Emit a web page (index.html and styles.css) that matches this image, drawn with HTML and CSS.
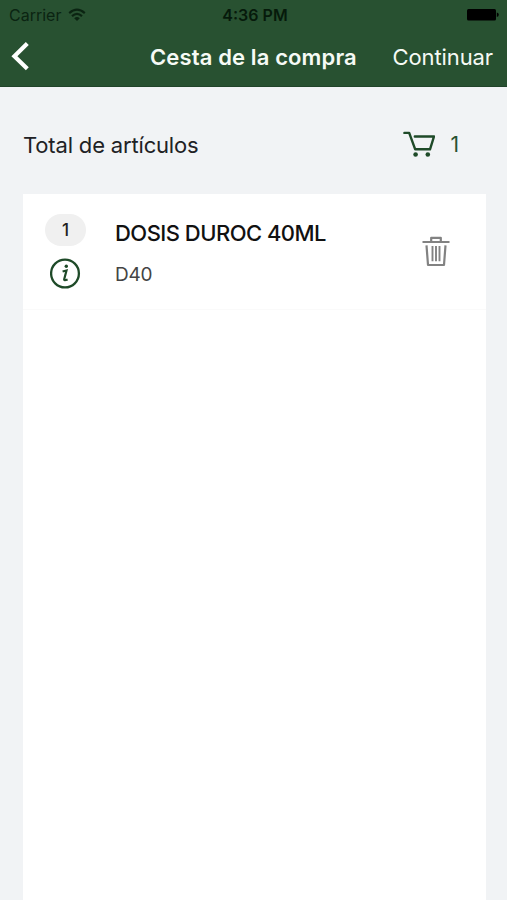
FILE: index.html
```html
<!DOCTYPE html>
<html lang="es">
<head>
<meta charset="utf-8">
<title>Cesta de la compra</title>
<link rel="stylesheet" href="styles.css">
</head>
<body>
<header class="header">
  <div class="status">
    <div class="carrier"><span class="carrier-name">Carrier</span>
      <svg class="wifi" width="18" height="14" viewBox="0 0 18 14" fill="none" stroke="currentColor" stroke-width="2.1"><path d="M1.2 5.1Q9-1.8 16.8 5.1M4 8.1Q9 3.7 14 8.1"/><path d="M6.2 10.3Q9 7.7 11.8 10.3L9 13Z" fill="currentColor" stroke="none"/></svg>
    </div>
    <span class="time">4:36 PM</span>
    <svg class="battery" width="33" height="12" viewBox="0 0 33 12"><rect x="1" width="29" height="11.5" rx="1.5"/><path d="M30.8 3.6Q32.8 4 32.8 5.8T30.8 8Z"/></svg>
  </div>
  <nav class="nav">
    <svg class="back" width="20" height="30" viewBox="0 0 20 30" fill="none" stroke="#fff" stroke-width="4.2"><path d="M17.3 1.6 4.4 14.2 17.3 26.8"/></svg>
    <h1 class="title">Cesta de la compra</h1>
    <span class="continue">Continuar</span>
  </nav>
</header>
<section class="summary">
  <span class="label">Total de artículos</span>
  <svg class="cart" width="32" height="27" viewBox="0 0 32 27" fill="none" stroke="currentColor" stroke-width="2.4"><path d="M1.4 1.9H6.2L12.2 18.3H27L31 5.5H11.8" stroke-linejoin="round" stroke-linecap="round"/><circle cx="12.6" cy="23.5" r="2.3" fill="currentColor" stroke="none"/><circle cx="24.8" cy="23.5" r="2.3" fill="currentColor" stroke="none"/></svg>
  <span class="count">1</span>
</section>
<main class="list">
  <article class="item">
    <div class="meta">
      <span class="qty">1</span>
      <svg class="info" width="31" height="31" viewBox="0 0 31 31" fill="none" stroke="currentColor"><circle cx="15" cy="15.5" r="13.9" stroke-width="2.3"/><path d="M12.6 13.5 16.5 12.5 14.2 21.3Q13.8 23 17.6 21.5" stroke-width="2.2"/><circle cx="16.3" cy="8.3" r="1.7" fill="currentColor" stroke="none"/></svg>
    </div>
    <div class="text">
      <h2 class="name">DOSIS DUROC 40ML</h2>
      <p class="code">D40</p>
    </div>
    <svg class="trash" width="28" height="31" viewBox="0 0 28 31" fill="none" stroke="currentColor" stroke-width="2.2" stroke-linejoin="round"><path d="M.5 6H27.5M9.2 5V1.8H18.8V5M4.5 9.3 6 29H22L23.5 9.3"/><path d="M10.5 10V25.3M17.5 10V25.3M14 10V25.3" stroke-width="1.9"/></svg>
  </article>
</main>
</body>
</html>
```

FILE: styles.css
```css
* { box-sizing: border-box; }
body {
  margin: 0;
  height: 900px;
  display: flex;
  flex-direction: column;
  overflow: hidden;
  background: #f1f3f5;
  font-family: Inter, "Liberation Sans", sans-serif;
}
h1, h2, p { margin: 0; }
svg { display: block; flex: none; }
span, h1, h2, p { white-space: nowrap; }
.header { height: 87px; flex: none; background: #285131; border-bottom: 1px solid #21442a; }
.status {
  height: 29px;
  display: grid;
  grid-template-columns: 1fr auto 1fr;
  align-items: center;
  padding: 0 8px 0 9px;
  color: #0b2412;
}
.carrier { display: flex; align-items: center; gap: 7px; }
.carrier-name { font-size: 16px; line-height: 20px; }
.time { margin-left: 2px; font-size: 16px; font-weight: 600; color: #061a0b; }
.battery { justify-self: end; fill: #000; }
.nav { height: 55px; display: flex; align-items: center; padding: 0 14px 0 10px; color: #f6faf5; }
.title { margin-left: 120px; font-size: 22px; line-height: 28px; font-weight: 600; letter-spacing: 0.13px; }
.continue { margin-left: auto; font-size: 22px; line-height: 28px; letter-spacing: -0.1px; }
.summary { height: 107px; flex: none; display: flex; align-items: center; padding: 8px 48px 0 23px; color: #285131; }
.label { font-size: 22px; color: #202124; letter-spacing: -0.17px; }
.cart { margin-left: auto; color: #1e4a28; }
.count { margin-left: 15px; font-size: 21px; }
.list { flex: 1; margin: 0 21px 0 23px; background: #fff; }
.item { height: 116px; display: flex; padding: 20px 36px 0 22px; border-bottom: 1px solid #fafafa; }
.meta { width: 41px; display: flex; flex-direction: column; align-items: center; gap: 12px; }
.qty {
  width: 41px;
  height: 32px;
  border-radius: 16px;
  background: #f0f0f0;
  color: #222;
  font-size: 17px;
  font-weight: 500;
  line-height: 32px;
  text-align: center;
}
.info { color: #1e4a28; }
.text { margin-left: 29px; }
.name { margin-top: 5px; font-size: 22px; line-height: 28px; font-weight: 500; letter-spacing: -0.53px; color: #111; }
.code { margin-top: 16px; font-size: 19px; line-height: 24px; letter-spacing: -0.3px; color: #444; }
.trash { margin: 22px 0 0 auto; color: #828282; }
```
